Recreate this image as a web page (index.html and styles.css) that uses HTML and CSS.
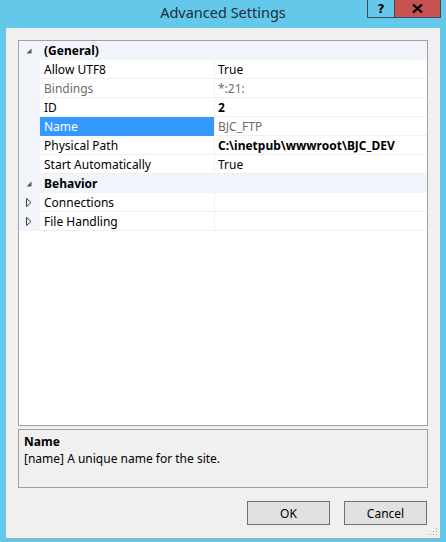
FILE: index.html
```html
<!DOCTYPE html>
<html>
<head>
<meta charset="utf-8">
<link rel="stylesheet" href="styles.css">
</head>
<body>
<div class="window">
  <div class="titlebar">
    <div></div>
    <div class="title">Advanced Settings</div>
    <div class="caption">
      <div class="cbtn help">?</div>
      <div class="cbtn close">
        <svg width="11" height="9" viewBox="0 0 11 9"><path d="M1 0.5 L10 8.5 M10 0.5 L1 8.5" stroke="#000" stroke-width="2.2" fill="none"/></svg>
      </div>
    </div>
  </div>
  <div class="client">
    <div class="grid">
      <div class="row cat">
        <div class="gut"><svg width="6" height="6" viewBox="0 0 6 6"><path d="M5.5 0.5 L5.5 5.5 L0.5 5.5 Z" fill="#595959"/></svg></div>
        <div class="cattext">(General)</div>
      </div>
      <div class="row">
        <div class="gut"></div><div class="name">Allow UTF8</div><div class="val">True</div>
      </div>
      <div class="row">
        <div class="gut"></div><div class="name dim">Bindings</div><div class="val dim">*:21:</div>
      </div>
      <div class="row">
        <div class="gut"></div><div class="name">ID</div><div class="val bold">2</div>
      </div>
      <div class="row">
        <div class="gut"></div><div class="name sel">Name</div><div class="val dim">BJC_FTP</div>
      </div>
      <div class="row">
        <div class="gut"></div><div class="name">Physical Path</div><div class="val bold">C:\inetpub\wwwroot\BJC_DEV</div>
      </div>
      <div class="row">
        <div class="gut"></div><div class="name">Start Automatically</div><div class="val">True</div>
      </div>
      <div class="row cat">
        <div class="gut"><svg width="6" height="6" viewBox="0 0 6 6"><path d="M5.5 0.5 L5.5 5.5 L0.5 5.5 Z" fill="#595959"/></svg></div>
        <div class="cattext">Behavior</div>
      </div>
      <div class="row">
        <div class="gut"><svg width="6" height="9" viewBox="0 0 6 9"><path d="M0.5 0.5 L5 4.5 L0.5 8.5 Z" fill="none" stroke="#404040" stroke-width="1"/></svg></div><div class="name">Connections</div><div class="val"></div>
      </div>
      <div class="row">
        <div class="gut"><svg width="6" height="9" viewBox="0 0 6 9"><path d="M0.5 0.5 L5 4.5 L0.5 8.5 Z" fill="none" stroke="#404040" stroke-width="1"/></svg></div><div class="name">File Handling</div><div class="val"></div>
      </div>
    </div>
    <div class="desc">
      <div class="dtitle">Name</div>
      <div class="dtext">[name] A unique name for the site.</div>
    </div>
    <div class="buttons">
      <div class="btn">OK</div>
      <div class="btn">Cancel</div>
    </div>
    <div class="grip">
      <svg width="8" height="8" viewBox="0 0 8 8" fill="#a0a0a0">
        <rect x="6" y="0" width="1" height="1"/>
        <rect x="3" y="3" width="1" height="1"/><rect x="6" y="3" width="1" height="1"/>
        <rect x="0" y="6" width="1" height="1"/><rect x="3" y="6" width="1" height="1"/><rect x="6" y="6" width="1" height="1"/>
      </svg>
    </div>
  </div>
</div>
</body>
</html>
```

FILE: styles.css
```css
html, body {
  margin: 0;
  padding: 0;
}
body {
  width: 446px;
  height: 542px;
  overflow: hidden;
  font-family: "Noto Sans", "Open Sans", sans-serif;
  font-size: 12px;
  color: #000;
}
.window {
  width: 446px;
  height: 542px;
  background: #63c8e9;
  display: flex;
  flex-direction: column;
  box-sizing: border-box;
}
.titlebar {
  height: 28px;
  display: grid;
  grid-template-columns: 1fr auto 1fr;
  align-items: start;
}
.title {
  font-size: 14.5px;
  color: #1b2f3a;
  line-height: 25px;
}
.caption {
  display: flex;
  justify-content: flex-end;
  padding-right: 5px;
}
.cbtn {
  height: 17px;
  border: 1px solid #3c4a52;
  border-top: none;
  display: flex;
  align-items: center;
  justify-content: center;
  font-family: "DejaVu Sans", sans-serif;
  font-weight: bold;
  font-size: 12px;
}
.help {
  width: 26px;
  border-right: none;
  background: #63c8e9;
}
.close {
  width: 45px;
  background: #c75050;
}
.client {
  flex: 1;
  margin: 0 6px 3px 6px;
  background: #f0f0f0;
  padding: 12px 12px 0 12px;
  display: flex;
  flex-direction: column;
  position: relative;
  border-bottom: 1px solid #a8a8a8;
}
.grid {
  height: 386px;
  box-sizing: border-box;
  border: 1px solid #a0a0a0;
  background: #fff;
}
.row {
  display: flex;
  height: 19px;
  box-sizing: border-box;
  line-height: 18px;
}
.gut {
  width: 21px;
  flex: none;
  background: #f1f5fb;
  display: flex;
  align-items: center;
  justify-content: center;
  padding-right: 1px;
  box-sizing: border-box;
}
.cat {
  background: #f1f5fb;
}
.cattext {
  font-weight: bold;
  padding-left: 4px;
  padding-top: 1px;
}
.name {
  width: 174px;
  flex: none;
  padding-left: 4px;
  padding-top: 1px;
  box-sizing: border-box;
  border-bottom: 1px solid #f0f0f0;
  white-space: nowrap;
}
.val {
  flex: 1;
  border-left: 1px solid #f0f0f0;
  border-bottom: 1px solid #f0f0f0;
  padding-left: 3px;
  padding-top: 1px;
  white-space: nowrap;
}
.dim {
  color: #6d6d6d;
}
.bold {
  font-weight: bold;
}
.name.sel {
  background: #3399ff;
  color: #fff;
  border-bottom-color: #3399ff;
}
.desc {
  margin-top: 3px;
  height: 59px;
  box-sizing: border-box;
  border: 1px solid #a0a0a0;
  padding: 3px 5px;
  line-height: 17px;
}
.dtitle {
  font-weight: bold;
}
.buttons {
  display: flex;
  justify-content: flex-end;
  gap: 14px;
  margin-top: 13px;
  padding-right: 1px;
}
.btn {
  width: 83px;
  height: 24px;
  box-sizing: border-box;
  border: 1px solid #707070;
  background: #e1e1e1;
  display: flex;
  align-items: center;
  justify-content: center;
}
.grip {
  position: absolute;
  right: 2px;
  bottom: 2px;
  line-height: 0;
}
```
